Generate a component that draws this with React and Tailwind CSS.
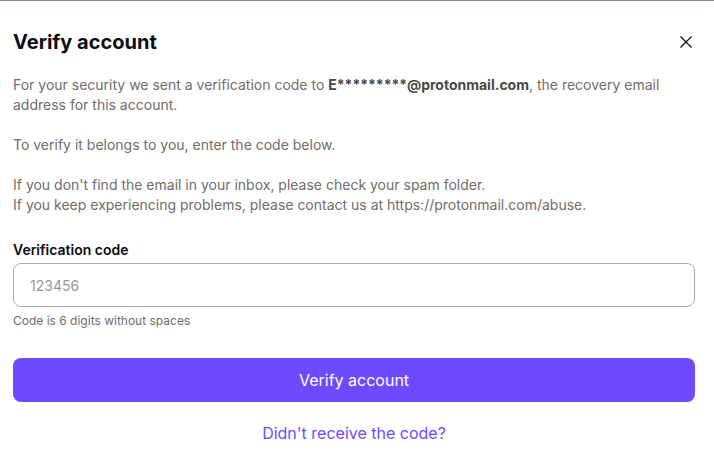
export default function App() {
  return (
    <div className="w-[714px] h-[454px] bg-white overflow-hidden relative" style={{ fontFamily: "Inter, 'Noto Sans', sans-serif" }}>
      <div className="h-px bg-[#86809a]" />
      <div className="pl-[13px] pr-[19px]">
        <div className="flex items-center justify-between pt-[28px]">
          <h1 className="text-[20px] leading-[26px] font-bold text-[#0c0c14]">Verify account</h1>
          <button className="w-[24px] h-[24px] flex items-center justify-center -mr-[3px] text-[#0c0c14]">
            <svg width="14" height="14" viewBox="0 0 14 14" fill="none" stroke="currentColor" strokeWidth="1.2">
              <path d="M1.5 1.5 L12.5 12.5 M12.5 1.5 L1.5 12.5" />
            </svg>
          </button>
        </div>
        <div className="mt-[20px] text-[14px] leading-[20px] text-[#706d6b]">
          <p>
            For your security we sent a verification code to <strong className="font-bold text-[#4a4846]">E*********@protonmail.com</strong>, the recovery email address for this account.
          </p>
          <p className="mt-[20px]">To verify it belongs to you, enter the code below.</p>
          <p className="mt-[20px]">If you don't find the email in your inbox, please check your spam folder.</p>
          <p>If you keep experiencing problems, please contact us at https://protonmail.com/abuse.</p>
        </div>
        <label className="block mt-[25px] text-[14px] leading-[20px] font-semibold text-[#0c0c14]">Verification code</label>
        <div className="mt-[3px] h-[44px] rounded-[8px] border border-[#adabaa] flex items-center px-[16px]">
          <span className="text-[14px] text-[#999693]">123456</span>
        </div>
        <p className="mt-[6px] text-[12px] leading-[16px] text-[#706d6b]">Code is 6 digits without spaces</p>
        <button className="mt-[29px] w-full h-[44px] rounded-[8px] bg-[#6d4aff] text-white text-[16px] flex items-center justify-center">
          Verify account
        </button>
        <div className="mt-[19px] text-center">
          <span className="text-[16px] leading-[24px] text-[#6d4aff]">Didn't receive the code?</span>
        </div>
      </div>
    </div>
  );
}
